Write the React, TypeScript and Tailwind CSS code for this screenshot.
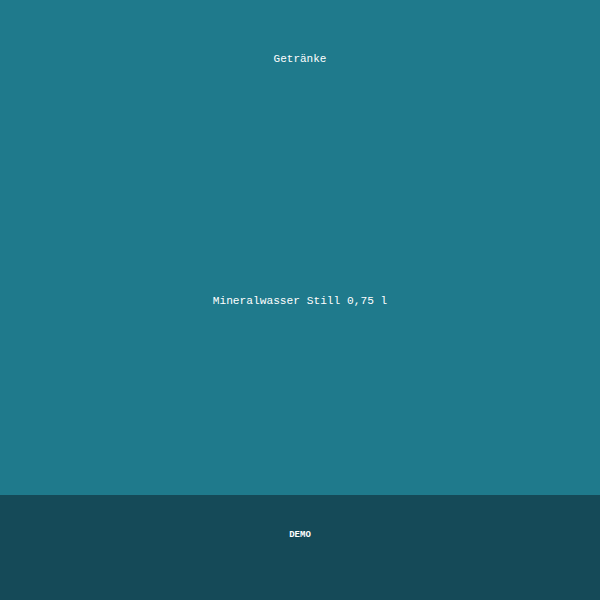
export default function App() {
  return (
    <div className="flex h-[600px] w-[600px] flex-col font-['Liberation_Mono',monospace] text-white">
      <div className="flex h-[495px] flex-col items-center bg-[#1f7a8c]">
        <div className="pt-[52px] text-[11px] leading-[14px]">Getränke</div>
        <div className="flex flex-1 items-center pt-[40px] text-[11.2px] leading-[14px]">
          Mineralwasser Still 0,75 l
        </div>
      </div>
      <div className="flex flex-1 items-start justify-center bg-[#154a58] pt-[35px]">
        <span className="text-[9px] font-bold leading-[10px]">DEMO</span>
      </div>
    </div>
  )
}
